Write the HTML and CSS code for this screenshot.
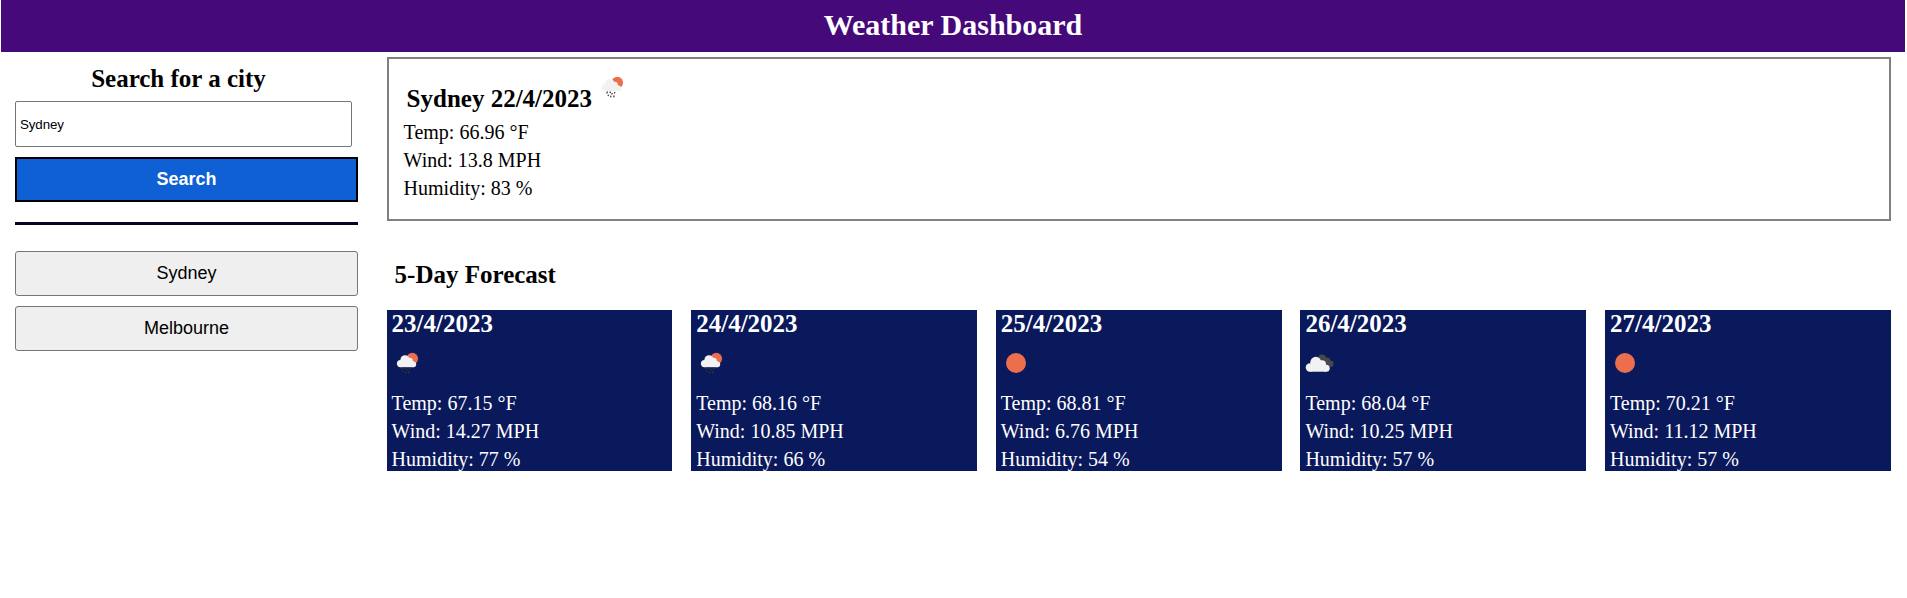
FILE: index.html
```
<!DOCTYPE html>
<html lang="en">
<head>
<meta charset="utf-8">
<title>Weather Dashboard</title>
<link rel="stylesheet" href="styles.css">
</head>
<body>
<svg width="0" height="0" class="sprite">
  <symbol id="rain" viewBox="0 0 30 30">
    <circle cx="20.300" cy="10.600" r="5.800" fill="#ec6e4c"/>
    <g fill="#f2f2f2"><circle cx="8.500" cy="15.600" r="3.600"/><circle cx="13" cy="11.800" r="4.600"/><circle cx="17.500" cy="13" r="3.300"/><circle cx="21.300" cy="16.300" r="2.900"/><rect x="8.500" y="13" width="12.800" height="6.200"/></g>
    <path d="M10.500 19.600l-.8 1.800M13.600 19.600l-.8 1.500M18 20l-.7 1.400M11.500 22.600l-.4 1.600M15.400 21l-.7 1.600M17.200 23.500l-.5 1.900M14 23.700l-.4 1.600" stroke="#38383a" stroke-width="1.200" fill="none"/>
  </symbol>
  <symbol id="sun" viewBox="0 0 30 30"><circle cx="15" cy="15" r="10" fill="#ec6e4c"/></symbol>
  <symbol id="cloud" viewBox="0 0 30 30">
    <g fill="#48484a"><circle cx="17" cy="10.800" r="4.200"/><circle cx="22" cy="12.600" r="3.200"/><circle cx="25.200" cy="15.700" r="3.300"/><path d="M15 9l7 1 4 9h-6z"/></g>
    <g fill="#f2f2f2"><circle cx="4.900" cy="19.500" r="4.200"/><circle cx="10.800" cy="14.300" r="5.500"/><circle cx="17" cy="16.300" r="4"/><circle cx="21.200" cy="20.200" r="3.500"/><rect x="4.900" y="17" width="16.300" height="6.700"/></g>
  </symbol>
</svg>
<header class="header"><h1 class="title">Weather Dashboard</h1></header>
<div class="layout">
  <aside class="sidebar">
    <h2 class="search-title">Search for a city</h2>
    <input class="search-input" type="text" value="Sydney">
    <button class="button search-button">Search</button>
    <hr class="divider">
    <button class="button">Sydney</button>
    <button class="button">Melbourne</button>
  </aside>
  <main class="main">
    <section class="current">
      <div class="current-head"><h2 class="current-title">Sydney 22/4/2023</h2><svg class="icon"><use href="#rain"/></svg></div>
      <p class="line">Temp: 66.96 °F</p>
      <p class="line">Wind: 13.8 MPH</p>
      <p class="line">Humidity: 83 %</p>
    </section>
    <h2 class="forecast-title">5-Day Forecast</h2>
    <section class="cards">
      <article class="card"><h3 class="date">23/4/2023</h3><svg class="icon"><use href="#rain"/></svg><p class="line">Temp: 67.15 °F</p><p class="line">Wind: 14.27 MPH</p><p class="line">Humidity: 77 %</p></article>
      <article class="card"><h3 class="date">24/4/2023</h3><svg class="icon"><use href="#rain"/></svg><p class="line">Temp: 68.16 °F</p><p class="line">Wind: 10.85 MPH</p><p class="line">Humidity: 66 %</p></article>
      <article class="card"><h3 class="date">25/4/2023</h3><svg class="icon"><use href="#sun"/></svg><p class="line">Temp: 68.81 °F</p><p class="line">Wind: 6.76 MPH</p><p class="line">Humidity: 54 %</p></article>
      <article class="card"><h3 class="date">26/4/2023</h3><svg class="icon"><use href="#cloud"/></svg><p class="line">Temp: 68.04 °F</p><p class="line">Wind: 10.25 MPH</p><p class="line">Humidity: 57 %</p></article>
      <article class="card"><h3 class="date">27/4/2023</h3><svg class="icon"><use href="#sun"/></svg><p class="line">Temp: 70.21 °F</p><p class="line">Wind: 11.12 MPH</p><p class="line">Humidity: 57 %</p></article>
    </section>
  </main>
</div>
</body>
</html>
```
FILE: styles.css
```
* { box-sizing: border-box; margin: 0; padding: 0; }
body { background: #fff; color: #000; font-family: "Liberation Serif", "Times New Roman", serif; }
.sprite { display: none; }
.header { height: 52px; margin: 0 2px 0 1px; background: #45097a; color: #fff; text-align: center; }
.title { font-size: 30px; line-height: 34px; padding-top: 8px; }
.layout { display: flex; gap: 28.6px; padding: 5px 16.3px 0 15px; }
.sidebar { width: 343px; display: flex; flex-direction: column; }
.search-title { font-size: 25px; line-height: 28px; margin: 8px 16px 8px 0; text-align: center; }
.search-input { width: 337px; height: 46px; padding: 1px 4px; border: 1px solid #767676; border-radius: 2px; font: 13.333px "Liberation Sans", Arial, sans-serif; letter-spacing: -0.1px; margin-bottom: 10px; }
.button { height: 45px; border: 1px solid #767676; border-radius: 3px; background: #efefef; color: #000; font: 18px "Liberation Sans", Arial, sans-serif; margin-bottom: 10px; }
.search-button { border: 2px solid #000; border-radius: 0; background: #0f5fd5; color: #fff; font-weight: bold; margin-bottom: 20px; }
.divider { border: 0; height: 3px; background: #0a0124; margin-bottom: 26px; }
.main { flex: 1; }
.current { height: 164px; border: 2px solid #808080; padding: 13px 15px 0; }
.current-head { display: flex; padding-left: 3px; margin-bottom: 5px; height: 44px; }
.current-title { font-size: 25px; line-height: 28px; padding-top: 13px; width: 190px; white-space: nowrap; }
.icon { display: block; width: 30px; height: 30px; flex: none; }
.line { font-size: 20px; line-height: 23px; margin-bottom: 5px; }
.forecast-title { font-size: 25px; line-height: 28px; margin: 40px 0 21px 8px; }
.cards { display: grid; grid-template-columns: repeat(5, 1fr); gap: 18.9px; }
.card { height: 161px; padding: 0 5px; background: #0a185c; color: #fff; }
.date { font-size: 25px; line-height: 28px; margin-bottom: 10px; }
.card .icon { margin-bottom: 14px; }
.card .line:last-child { margin-bottom: 0; }
```
